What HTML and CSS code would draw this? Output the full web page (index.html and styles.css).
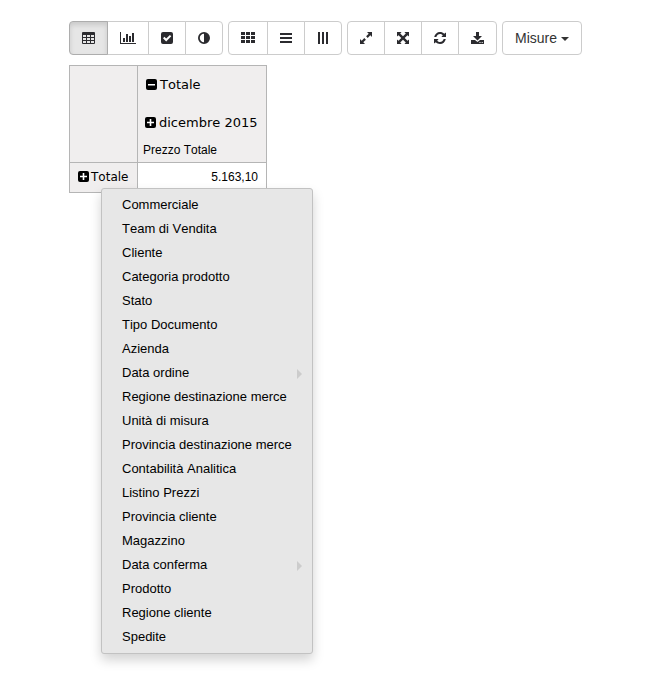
FILE: index.html
```html
<!DOCTYPE html>
<html lang="it">
<head>
<meta charset="utf-8">
<title>Pivot</title>
<link rel="stylesheet" href="styles.css">
</head>
<body>
<div class="toolbar">
  <div class="group">
    <button class="btn active w39"><svg width="13" height="12" viewBox="0 0 13 12"><path fill-rule="evenodd" d="M1 0h11q1 0 1 1v10q0 1-1 1H1q-1 0-1-1V1q0-1 1-1zM1 3v2h3V3zM5 3v2h3V3zM9 3v2h3V3zM1 6v2h3V6zM5 6v2h3V6zM9 6v2h3V6zM1 9v2h3V9zM5 9v2h3V9zM9 9v2h3V9z"/></svg></button>
    <button class="btn w42"><svg width="16" height="12" viewBox="0 0 16 12"><path d="M0 0h1v11h15v1H0zM3 6h2v4H3zM6 2h2v8H6zM9 4h2v6H9zM12 1h2v9h-2z"/></svg></button>
    <button class="btn"><svg width="12" height="12" viewBox="0 0 12 12"><path fill-rule="evenodd" d="M2 0h8q2 0 2 2v8q0 2-2 2H2q-2 0-2-2V2Q0 0 2 0zM2 6.2l3.2 3.2L10.3 4.3 8.900 2.900 5.200 6.600 3.400 4.800z"/></svg></button>
    <button class="btn"><svg width="12" height="12" viewBox="0 0 12 12"><path fill-rule="evenodd" d="M6 0a6 6 0 0 1 0 12A6 6 0 0 1 6 0zM6 1.800a4.200 4.200 0 0 0 0 8.400z"/></svg></button>
  </div>
  <div class="group">
    <button class="btn w40"><svg width="14" height="12" viewBox="0 0 14 12"><path d="M0 0h4v3H0zM5 0h4v3H5zM10 0h4v3h-4zM0 4h4v3H0zM5 4h4v3H5zM10 4h4v3h-4zM0 8h4v3H0zM5 8h4v3H5zM10 8h4v3h-4z"/></svg></button>
    <button class="btn"><svg width="12" height="12" viewBox="0 0 12 12"><path d="M0 1h12v2H0zM0 5h12v2H0zM0 9h12v2H0z"/></svg></button>
    <button class="btn"><svg width="12" height="12" viewBox="0 0 12 12"><path d="M1 0h2v12H1zM5 0h2v12H5zM9 0h2v12H9z"/></svg></button>
  </div>
  <div class="group">
    <button class="btn"><svg width="12" height="12" viewBox="0 0 12 12"><path d="M7 0h5v5l-1.700-1.700-2.600 2.600-1.600-1.600 2.600-2.600zM0 7l1.700 1.700 2.600-2.600 1.600 1.600-2.600 2.600L5 12H0z"/></svg></button>
    <button class="btn"><svg width="12" height="12" viewBox="0 0 12 12"><path d="M0 0h4.600L3.200 1.500 6 4.300l2.800-2.800L7.400 0H12v4.600l-1.500-1.400L7.700 6l2.800 2.800L12 7.400V12H7.400l1.400-1.500L6 7.700l-2.800 2.800L4.600 12H0V7.400l1.500 1.400L4.300 6 1.500 3.200 0 4.600z"/></svg></button>
    <button class="btn"><svg width="12" height="12" viewBox="0 0 12 12"><path d="M.2 5C.8 2 3.100 0 6 0c1.600 0 3.100.6 4.200 1.700L12 .4V5H7.400l1.400-1.700C8 2.500 7 2 6 2 4.300 2 3 3 2.300 5zM11.800 7C11.200 10 8.900 12 6 12c-1.600 0-3.100-.6-4.200-1.700L0 11.600V7h4.600L3.200 8.700C4 9.500 5 10 6 10c1.700 0 3-1 3.700-3z"/></svg></button>
    <button class="btn w39"><svg width="13" height="13" viewBox="0 0 13 13"><path fill-rule="evenodd" d="M5 0h3v4h3L6.500 8.500 2 4h3zM0 8h4l2.500 2L9 8h4v4H0zM8.500 10v1h1v-1zM10.700 10v1h1v-1z"/></svg></button>
  </div>
  <button class="btn measure">Misure<span class="caret"></span></button>
</div>

<div class="pivot">
  <div class="corner"></div>
  <div class="heads">
    <div class="head first"><svg class="sq" width="11" height="11" viewBox="0 0 11 11"><rect width="11" height="11" rx="2"/><path class="sign" d="M2 5h7v1.500H2z"/></svg><span>Totale</span></div>
    <div class="head second"><svg class="sq" width="11" height="11" viewBox="0 0 11 11"><rect width="11" height="11" rx="2"/><path class="sign" d="M2 4.700h2.700V2h1.600v2.700H9v1.600H6.300V9H4.700V6.300H2z"/></svg><span>dicembre 2015</span></div>
    <div class="field">Prezzo Totale</div>
  </div>
  <div class="rowhead"><svg class="sq" width="11" height="11" viewBox="0 0 11 11"><rect width="11" height="11" rx="2"/><path class="sign" d="M2 4.700h2.700V2h1.600v2.700H9v1.600H6.300V9H4.700V6.300H2z"/></svg><span>Totale</span></div>
  <div class="value">5.163,10</div>
  <ul class="menu">
    <li>Commerciale</li>
    <li>Team di Vendita</li>
    <li>Cliente</li>
    <li>Categoria prodotto</li>
    <li>Stato</li>
    <li>Tipo Documento</li>
    <li>Azienda</li>
    <li class="sub">Data ordine</li>
    <li>Regione destinazione merce</li>
    <li>Unità di misura</li>
    <li>Provincia destinazione merce</li>
    <li>Contabilità Analitica</li>
    <li>Listino Prezzi</li>
    <li>Provincia cliente</li>
    <li>Magazzino</li>
    <li class="sub">Data conferma</li>
    <li>Prodotto</li>
    <li>Regione cliente</li>
    <li>Spedite</li>
  </ul>
</div>
</body>
</html>
```
FILE: styles.css
```css
* { box-sizing: border-box; }
body {
  min-height: 100vh;
  margin: 0;
  padding: 21px 0 0 69px;
  background: #fff;
  color: #000;
  font-family: "Liberation Sans", Arial, sans-serif;
  font-kerning: none;
}
.toolbar { display: flex; gap: 5px; height: 34px; }
.group { display: flex; }
.btn {
  display: flex;
  align-items: center;
  justify-content: center;
  width: 38px;
  height: 34px;
  padding: 0;
  border: 1px solid #ccc;
  background: #fff;
  color: #333;
  font: 14px/20px "Liberation Sans", Arial, sans-serif;
}
.btn svg { display: block; fill: #2b2b2f; }
.group .btn + .btn { margin-left: -1px; }
.group .btn:first-child { border-radius: 4px 0 0 4px; }
.group .btn:last-child { border-radius: 0 4px 4px 0; }
.group .w39 { width: 39px; }
.w40 { width: 40px; }
.w42 { width: 42px; }
.btn.active {
  position: relative;
  z-index: 1;
  border-color: #adadad;
  background: #e6e6e6;
  box-shadow: inset 0 3px 5px rgba(0, 0, 0, .125);
}
.measure { width: 80px; border-radius: 4px; }
.caret {
  margin: 1px 0 0 4px;
  border-top: 4px solid #333;
  border-right: 4px solid transparent;
  border-left: 4px solid transparent;
}

.pivot {
  position: relative;
  display: grid;
  grid-template-columns: 67px 128px;
  grid-template-rows: 96px 29px;
  gap: 1px;
  width: 198px;
  margin-top: 10px;
  border: 1px solid #b5b5b5;
  background: #b5b5b5;
}
.corner, .heads, .rowhead { background: #f0eeee; }
.head, .rowhead {
  display: flex;
  align-items: center;
  font-family: "DejaVu Sans", sans-serif;
  font-size: 13px;
  white-space: nowrap;
}
.head { height: 38px; padding-bottom: 2px; gap: 3px; }
.first { padding-left: 8px; }
.second { padding-left: 7px; }
.sign { fill: #fff; }
.field { padding-left: 5px; font-size: 12px; line-height: 16px; }
.rowhead { padding: 0 0 2px 8px; gap: 2px; font-size: 12px; }
.value {
  padding: 0 8px 0 0;
  background: #fff;
  font-size: 12px;
  line-height: 28px;
  text-align: right;
}

.menu {
  position: absolute;
  top: 122px;
  left: 31px;
  width: 212px;
  height: 466px;
  margin: 0;
  padding: 3px 0 0;
  border: 1px solid #c2c2c2;
  border-radius: 3px;
  background: #e7e7e7;
  box-shadow: 0 6px 12px rgba(0, 0, 0, .175);
  list-style: none;
  font-size: 13px;
}
.menu li {
  display: flex;
  align-items: center;
  height: 24px;
  padding: 0 10px 0 20px;
  white-space: nowrap;
}
.sub::after {
  content: "";
  margin: 4px 0 0 auto;
  border-top: 5px solid transparent;
  border-bottom: 5px solid transparent;
  border-left: 5px solid #ccc;
}
```
